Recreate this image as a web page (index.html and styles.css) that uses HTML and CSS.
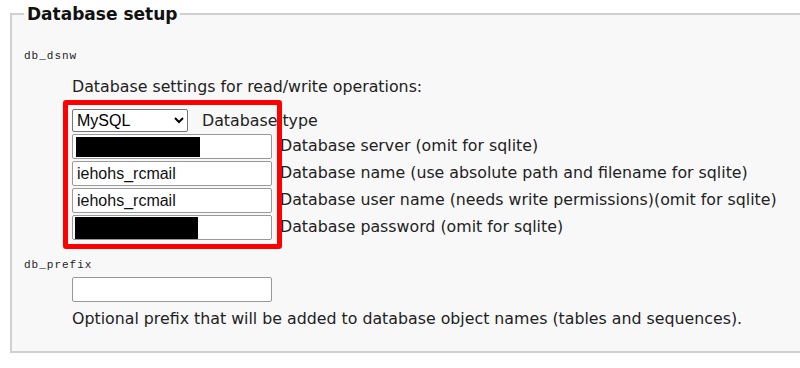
FILE: index.html
```html
<!DOCTYPE html>
<html lang="en">
<head>
  <meta charset="UTF-8" />
  <title>Database setup</title>
  <link rel="stylesheet" href="styles.css">
</head>
<body>
  <fieldset class="setup">
    <legend>Database setup</legend>

    <div class="prop">db_dsnw</div>
    <div class="prop-body">
      <p class="desc">Database settings for read/write operations:</p>
      <div class="marked">
        <table class="dsn">
          <tr>
            <td><select class="db-type"><option>MySQL</option></select></td>
            <td class="type-label">Database type</td>
          </tr>
          <tr>
            <td colspan="2"><input type="text" value="" /><span class="redact r1"></span>Database server (omit for sqlite)</td>
          </tr>
          <tr>
            <td colspan="2"><input type="text" value="iehohs_rcmail" />Database name (use absolute path and filename for sqlite)</td>
          </tr>
          <tr>
            <td colspan="2"><input type="text" value="iehohs_rcmail" />Database user name (needs write permissions)(omit for sqlite)</td>
          </tr>
          <tr>
            <td colspan="2"><input type="text" value="" /><span class="redact r2"></span>Database password (omit for sqlite)</td>
          </tr>
        </table>
        <div class="highlight"></div>
      </div>
    </div>

    <div class="prop prop-next">db_prefix</div>
    <div class="prop-body">
      <input type="text" class="prefix" value="" />
      <p class="hint">Optional prefix that will be added to database object names (tables and sequences).</p>
    </div>
  </fieldset>
</body>
</html>
```

FILE: styles.css
```css
body {
  margin: 0;
  background: #fff;
  font-family: "DejaVu Sans", Verdana, sans-serif;
  font-size: 15.8px;
  color: #222;
  overflow: hidden;
}

.setup {
  margin: 4px 0 0 10px;
  padding: 0 0 11px 12px;
  width: 820px;
  border: 2px solid #d0d0d0;
  background: #f8f8f8;
}

.setup legend {
  font-size: 17px;
  font-weight: bold;
  color: #111;
  padding: 0 3px;
}

.prop {
  font-family: "Liberation Mono", monospace;
  font-size: 11px;
  letter-spacing: 1px;
  color: #222;
  margin-top: 26px;
}

.prop-next {
  margin-top: 15px;
}

.prop-body {
  margin-left: 48px;
}

.desc {
  margin: 15px 0 13px;
}

.marked {
  position: relative;
  display: inline-block;
}

.dsn {
  border-collapse: separate;
  border-spacing: 0 2px;
  margin: -2px 0;
}

.dsn td {
  padding: 0;
  white-space: nowrap;
}

.db-type {
  width: 116px;
  height: 23px;
  font-family: "Liberation Sans", Arial, sans-serif;
  font-size: 16px;
  border: 1px solid #767676;
  border-radius: 2px;
  background: #fff;
  color: #000;
  margin-right: 14px;
}

.type-label {
  width: 100%;
}

.dsn input,
.prefix {
  width: 200px;
  height: 25px;
  box-sizing: border-box;
  border: 1px solid #999;
  border-radius: 2px;
  padding: 0 4px;
  font-family: "Liberation Sans", Arial, sans-serif;
  font-size: 16px;
  color: #111;
  background: #fff;
  margin: 0 8px 0 0;
  vertical-align: middle;
}

.redact {
  position: absolute;
  left: 4px;
  width: 124px;
  height: 20px;
  background: #000;
  margin-top: 3px;
}

.r1 { left: 4px; }
.r2 { left: 3px; width: 123px; height: 22px; margin-top: 2px; }

.highlight {
  position: absolute;
  left: -9px;
  top: -9px;
  width: 209px;
  height: 139px;
  border: 5px solid #f00;
  border-radius: 3px;
  pointer-events: none;
}

.prefix {
  margin-top: 6px;
}

.hint {
  margin: 7px 0 0;
  padding-bottom: 12px;
}
```
